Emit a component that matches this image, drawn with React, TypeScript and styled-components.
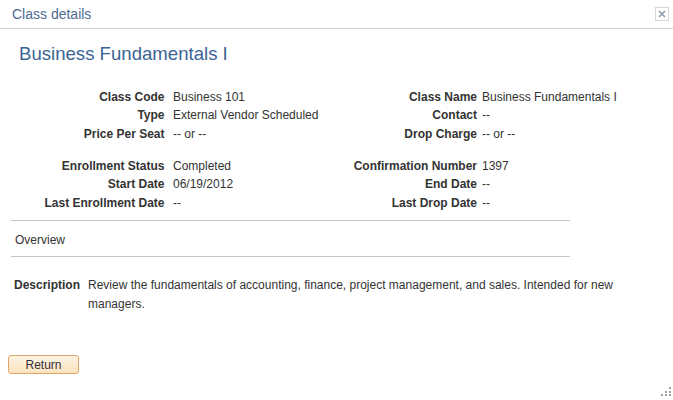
import React from 'react';
import styled, { createGlobalStyle } from 'styled-components';

// Global reset
const GlobalStyle = createGlobalStyle`
  html, body {
    margin: 0;
    padding: 0;
    background: #ffffff;
  }
  body {
    font-family: "Liberation Sans", Arial, sans-serif;
    color: #333333;
  }
`;

// Data
interface Field {
  label: string;
  value: string;
}

interface FieldRow {
  left: Field;
  right: Field;
}

const groups: FieldRow[][] = [
  [
    { left: { label: 'Class Code', value: 'Business 101' }, right: { label: 'Class Name', value: 'Business Fundamentals I' } },
    { left: { label: 'Type', value: 'External Vendor Scheduled' }, right: { label: 'Contact', value: '--' } },
    { left: { label: 'Price Per Seat', value: '-- or --' }, right: { label: 'Drop Charge', value: '-- or --' } },
  ],
  [
    { left: { label: 'Enrollment Status', value: 'Completed' }, right: { label: 'Confirmation Number', value: '1397' } },
    { left: { label: 'Start Date', value: '06/19/2012' }, right: { label: 'End Date', value: '--' } },
    { left: { label: 'Last Enrollment Date', value: '--' }, right: { label: 'Last Drop Date', value: '--' } },
  ],
];

// Styled components
const Dialog = styled.div`
  position: relative;
  width: 673px;
  height: 400px;
  overflow: hidden;
  background: #ffffff;
`;

const Header = styled.div`
  height: 28px;
  border-bottom: 1px solid #cdd1d8;
  display: flex;
  align-items: center;
  justify-content: space-between;
  padding: 0 4px 0 12px;
`;

const HeaderTitle = styled.div`
  font-size: 14px;
  color: #4f6a93;
`;

const CloseButton = styled.button`
  width: 14px;
  height: 14px;
  padding: 0;
  border: 1px solid #d4d7dc;
  background: #ffffff;
  display: flex;
  align-items: center;
  justify-content: center;
  cursor: pointer;
`;

const Body = styled.div`
  padding: 0 12px 0 11px;
`;

const PageTitle = styled.h1`
  margin: 14px 0 0 8px;
  font-size: 18.6px;
  line-height: 22px;
  font-weight: normal;
  color: #3b6494;
`;

const DetailsGrid = styled.div`
  margin-top: 23px;
  display: grid;
  grid-template-columns: 153.5px 175.5px 137px 1fr;
  font-size: 12px;
  line-height: 18.4px;
`;

const Label = styled.div`
  font-weight: bold;
  text-align: right;
  white-space: nowrap;
  color: #333333;
`;

const Value = styled.div<{ $gap: number }>`
  padding-left: ${p => p.$gap}px;
  white-space: nowrap;
  color: #333333;
`;

const GroupSpacer = styled.div`
  grid-column: 1 / -1;
  height: 13.5px;
`;

const OverviewBar = styled.div`
  box-sizing: border-box;
  margin-top: 8px;
  width: 559px;
  border-top: 1px solid #c4c4c4;
  border-bottom: 1px solid #c4c4c4;
  padding: 10px 4px 7px;
  font-size: 12px;
  line-height: 18px;
  color: #333333;
`;

const DescriptionRow = styled.div`
  margin-top: 19px;
  display: flex;
  align-items: flex-start;
  font-size: 12px;
  line-height: 19.5px;
  padding-left: 3px;
`;

const DescriptionLabel = styled.div`
  font-weight: bold;
  margin-right: 8px;
  white-space: nowrap;
`;

const DescriptionText = styled.div`
  width: 562px;
`;

const Footer = styled.div`
  margin-top: 40px;
  padding-left: 8px;
`;

const ReturnButton = styled.button`
  width: 71px;
  height: 19px;
  padding: 0;
  border: 1px solid #e0a56a;
  border-radius: 3px;
  background: linear-gradient(to bottom, #fdf3e3 0%, #fbe3bd 100%);
  font-family: "Liberation Sans", Arial, sans-serif;
  font-size: 12px;
  color: #35303f;
  cursor: pointer;
`;

const ResizeGrip = styled.svg`
  position: absolute;
  right: 1px;
  bottom: 3px;
`;

const App: React.FC = () => {
  return (
    <>
      <GlobalStyle />
      <Dialog>
        <Header>
          <HeaderTitle>Class details</HeaderTitle>
          <CloseButton aria-label="Close">
            <svg width="8" height="8" viewBox="0 0 8 8">
              <path d="M1 1 L7 7 M7 1 L1 7" stroke="#8d9aab" strokeWidth="1.6" />
            </svg>
          </CloseButton>
        </Header>

        <Body>
          <PageTitle>Business Fundamentals I</PageTitle>

          <DetailsGrid>
            {groups.map((rows, gi) => (
              <React.Fragment key={gi}>
                {gi > 0 && <GroupSpacer />}
                {rows.map(row => (
                  <React.Fragment key={row.left.label}>
                    <Label>{row.left.label}</Label>
                    <Value $gap={8.5}>{row.left.value}</Value>
                    <Label>{row.right.label}</Label>
                    <Value $gap={5}>{row.right.value}</Value>
                  </React.Fragment>
                ))}
              </React.Fragment>
            ))}
          </DetailsGrid>

          <OverviewBar>Overview</OverviewBar>

          <DescriptionRow>
            <DescriptionLabel>Description</DescriptionLabel>
            <DescriptionText>
              Review the fundamentals of accounting, finance, project management, and sales. Intended for new managers.
            </DescriptionText>
          </DescriptionRow>
        </Body>

        <Footer>
          <ReturnButton>Return</ReturnButton>
        </Footer>

        <ResizeGrip width="12" height="11" viewBox="0 0 12 11">
          <g fill="#a0a0a0">
            <rect x="9" y="1" width="2" height="2" />
            <rect x="5" y="5" width="2" height="2" />
            <rect x="9" y="5" width="2" height="2" />
            <rect x="1" y="8" width="2" height="2" />
            <rect x="5" y="8" width="2" height="2" />
            <rect x="9" y="8" width="2" height="2" />
          </g>
        </ResizeGrip>
      </Dialog>
    </>
  );
};

export default App;
